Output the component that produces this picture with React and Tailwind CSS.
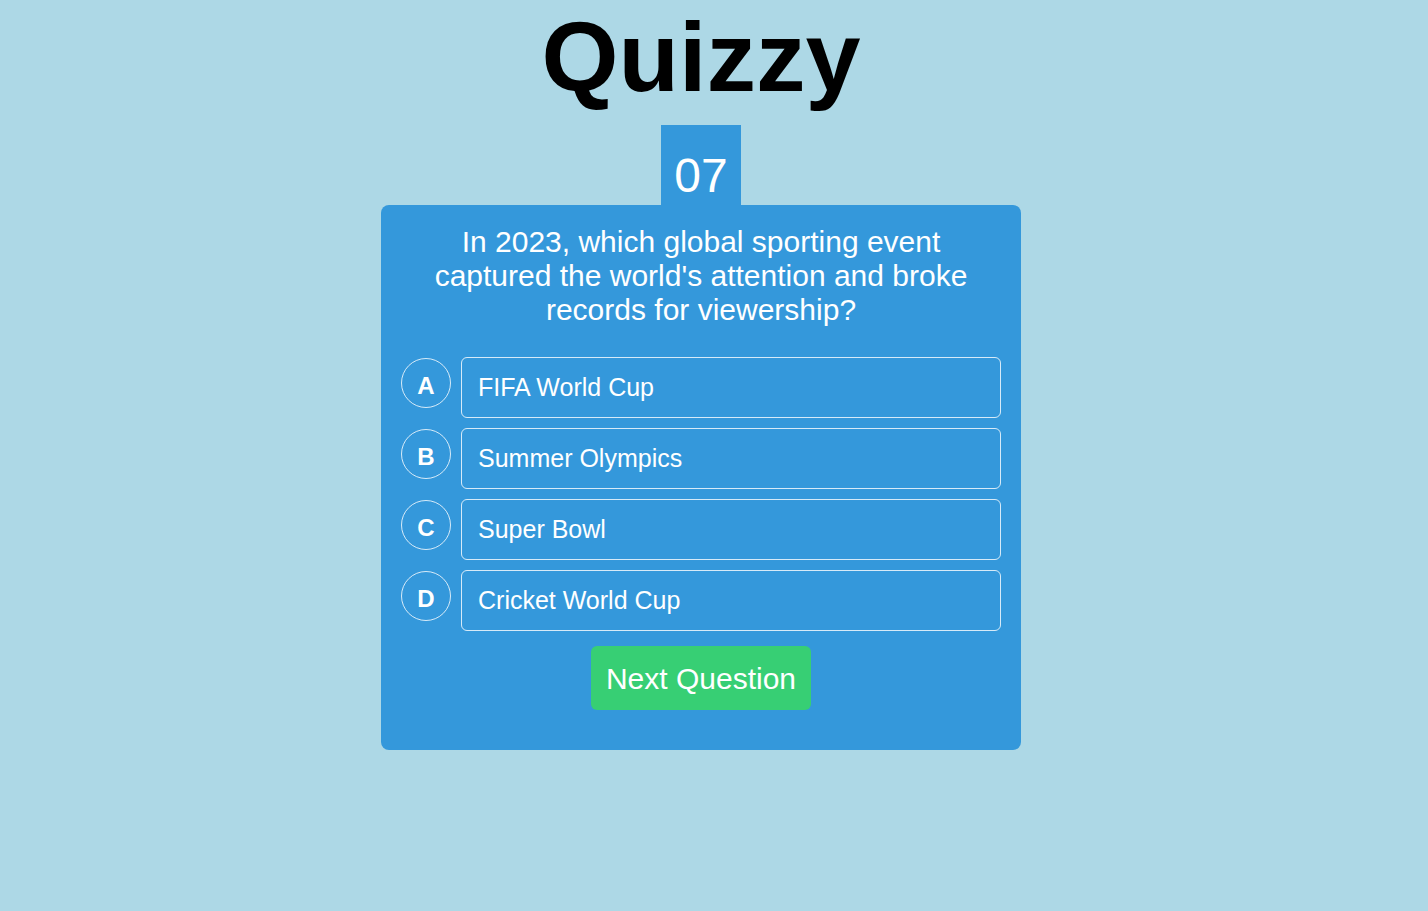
const options = [
    { letter: "A", text: "FIFA World Cup" },
    { letter: "B", text: "Summer Olympics" },
    { letter: "C", text: "Super Bowl" },
    { letter: "D", text: "Cricket World Cup" },
];

export default function App() {
    return (
        <div className="min-h-[911px] bg-[#add8e6] pr-[26px] font-['Liberation_Sans',Arial,sans-serif]">
            <div className="flex flex-col items-center">
                <h1 className="text-[99px] font-bold leading-[113px] text-black">
                    Quizzy
                </h1>
                <div className="mt-[12px] flex h-[80px] w-[80px] items-end justify-center bg-[#3498db] pb-[1px] text-[48px] leading-[56px] text-white">
                    07
                </div>
                <div className="w-[640px] rounded-[8px] bg-[#3498db] px-[20px] pb-[40px] pt-[20px]">
                    <p className="px-[20px] text-center text-[30px] leading-[34px] text-white">
                        In 2023, which global sporting event captured the
                        world's attention and broke records for viewership?
                    </p>
                    <div className="mt-[30px] flex flex-col gap-[10px]">
                        {options.map((option) => (
                            <div
                                key={option.letter}
                                className="flex items-start gap-[10px]"
                            >
                                <div className="mt-[1px] flex h-[50px] w-[50px] shrink-0 items-center justify-center rounded-full border border-white/80 pt-[6px] text-[24px] font-bold leading-[28px] text-white">
                                    {option.letter}
                                </div>
                                <div className="flex h-[61px] flex-1 items-center rounded-[6px] border border-white/80 px-[16px] text-[25px] text-white">
                                    {option.text}
                                </div>
                            </div>
                        ))}
                    </div>
                    <div className="mt-[15px] flex justify-center">
                        <button className="h-[64px] w-[220px] rounded-[6px] bg-[#37cf74] text-[30px] text-white">
                            Next Question
                        </button>
                    </div>
                </div>
            </div>
        </div>
    );
}
